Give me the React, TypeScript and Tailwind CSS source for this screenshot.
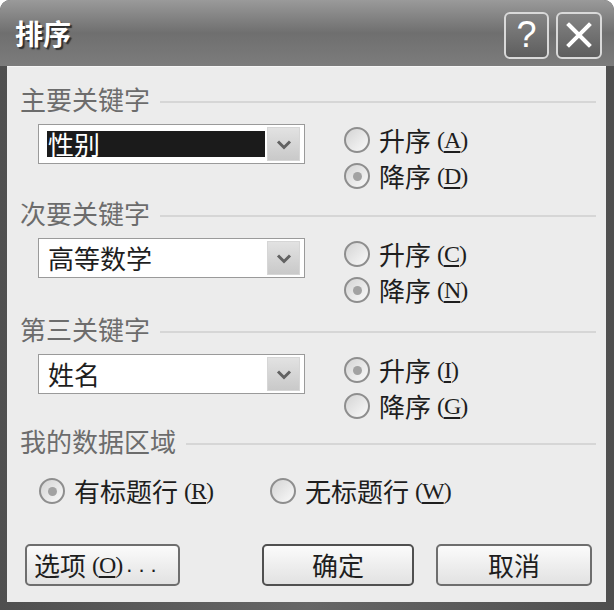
import React from 'react';

const cjk = "font-['Noto_Sans_CJK_SC','Noto_Sans_CJK_JP',sans-serif]";

// ─── Access key like (A) with underlined letter ─────────────
const AccessKey = ({ k }: { k: string }) => (
  <span className="ml-[6px] font-['Liberation_Serif',serif] text-[24px] leading-none tracking-[-1px] text-[#1e1e1e]">
    (<span className="underline underline-offset-[3px] decoration-[1.5px]">{k}</span>)
  </span>
);

const Radio = ({ label, k, checked }: { label: string; k: string; checked?: boolean }) => (
  <div className="flex items-center h-[36px]">
    <span className="w-[26px] h-[26px] shrink-0 rounded-full border-2 border-[#8e8e8e] bg-linear-to-br from-[#d4d4d4] to-[#fafafa] flex items-center justify-center">
      {checked && <span className="w-[9px] h-[9px] rounded-full bg-[#a2a2a2]" />}
    </span>
    <span className={`${cjk} ml-[9px] text-[26px] leading-none text-[#1e1e1e]`}>{label}</span>
    <AccessKey k={k} />
  </div>
);

const GroupLabel = ({ text }: { text: string }) => (
  <div className="flex items-center h-[28px] pl-[13px] pr-[10px]">
    <span className={`${cjk} text-[26px] leading-none text-[#6c6c6c]`}>{text}</span>
    <div className="flex-1 ml-[10px] mt-[6px] border-t-2 border-[#d6d6d6]" />
  </div>
);

const Combo = ({ value, selected }: { value: string; selected?: boolean }) => (
  <div className="w-[267px] h-[40px] shrink-0 border border-[#9a9a9a] bg-white flex pt-[2px] pb-[2px] pl-[8px] pr-[4px]">
    <div
      className={`flex-1 my-[4px] mr-[2px] flex items-center pl-[1px] ${cjk} text-[26px] leading-none ${
        selected ? 'bg-[#1b1b1b] text-white' : 'text-[#1e1e1e]'
      }`}
    >
      {value}
    </div>
    <div className="w-[33px] bg-linear-to-b from-[#e2e2e2] to-[#c9c9c9] border border-[#d6d6d6] flex items-center justify-center">
      <svg width="16" height="11" viewBox="0 0 16 11">
        <path d="M2 2.5 L8 8.5 L14 2.5" fill="none" stroke="#626262" strokeWidth="3" />
      </svg>
    </div>
  </div>
);

type RadioDef = { label: string; k: string; checked?: boolean };

const KeySection = ({
  label, value, selected, radios, top,
}: { label: string; value: string; selected?: boolean; radios: RadioDef[]; top: string }) => (
  <div className={`flex flex-col ${top}`}>
    <GroupLabel text={label} />
    <div className="flex items-start mt-[9px] pl-[31px]">
      <div className="mt-[2px]">
        <Combo value={value} selected={selected} />
      </div>
      <div className="ml-[39px] flex flex-col">
        {radios.map((r) => (
          <Radio key={r.k} {...r} />
        ))}
      </div>
    </div>
  </div>
);

const DialogButton = ({ children, w, extra }: { children: React.ReactNode; w: string; extra?: string }) => (
  <div
    className={`${w} h-[42px] rounded-[5px] border-2 border-[#6e6e6e] bg-linear-to-b from-[#fbfbfb] to-[#e2e2e2] flex items-center justify-center ${cjk} text-[26px] leading-none text-[#1e1e1e] ${extra ?? ''}`}
  >
    {children}
  </div>
);

const TitleBar = () => (
  <div className="h-[66px] shrink-0 bg-linear-to-b from-[#9a9a9a] via-[#6f6f6f] to-[#7c7c7c] flex items-center pl-[15px] pr-[12px]">
    <span className={`${cjk} font-bold text-[28px] leading-none text-white [text-shadow:2px_2px_1px_#2e2e2e]`}>排序</span>
    <div className="ml-auto flex gap-[7px] mt-[4px]">
      <div className="w-[45px] h-[47px] rounded-[6px] border-2 border-[#d9d9d9] bg-linear-to-b from-[#858585] to-[#5e5e5e] flex items-center justify-center">
        <span className="font-['Liberation_Sans',sans-serif] text-[36px] leading-none text-white">?</span>
      </div>
      <div className="w-[46px] h-[47px] rounded-[6px] border-2 border-[#d9d9d9] bg-linear-to-b from-[#858585] to-[#5e5e5e] flex items-center justify-center">
        <svg width="26" height="26" viewBox="0 0 26 26">
          <path d="M3 3 L23 23 M23 3 L3 23" stroke="white" strokeWidth="4" strokeLinecap="square" />
        </svg>
      </div>
    </div>
  </div>
);

export default function App() {
  return (
    <div className="w-[614px] h-[610px] bg-white">
      <div className="w-full h-full rounded-t-[10px] overflow-hidden bg-linear-to-r from-[#4f4f4f] via-[#666] to-[#4f4f4f] flex flex-col">
        <TitleBar />
        <div className="flex-1 ml-[7px] mr-[8px] mb-[8px] bg-[#ececec] border-t border-[#f6f6f6] flex flex-col pt-[18px]">
          <KeySection
            top=""
            label="主要关键字"
            value="性别"
            selected
            radios={[
              { label: '升序', k: 'A' },
              { label: '降序', k: 'D', checked: true },
            ]}
          />
          <KeySection
            top="mt-[5px]"
            label="次要关键字"
            value="高等数学"
            radios={[
              { label: '升序', k: 'C' },
              { label: '降序', k: 'N', checked: true },
            ]}
          />
          <KeySection
            top="mt-[7px]"
            label="第三关键字"
            value="姓名"
            radios={[
              { label: '升序', k: 'I', checked: true },
              { label: '降序', k: 'G' },
            ]}
          />

          {/* 我的数据区域 */}
          <div className="flex flex-col mt-[3px]">
            <GroupLabel text="我的数据区域" />
            <div className="flex items-center mt-[18px] pl-[32px]">
              <Radio label="有标题行" k="R" checked />
              <div className="ml-[57px]">
                <Radio label="无标题行" k="W" />
              </div>
            </div>
          </div>

          {/* Buttons */}
          <div className="flex mt-[35px] pl-[18px]">
            <DialogButton w="w-[155px]" extra="justify-start pl-[7px]">
              选项<AccessKey k="O" />
              <span className="ml-[4px] tracking-[6px] font-['Liberation_Sans',sans-serif] text-[22px]">...</span>
            </DialogButton>
            <DialogButton w="w-[152px] ml-[82px]" extra="border-[#505050]">确定</DialogButton>
            <DialogButton w="w-[156px] ml-[22px]">取消</DialogButton>
          </div>
        </div>
      </div>
    </div>
  );
}
